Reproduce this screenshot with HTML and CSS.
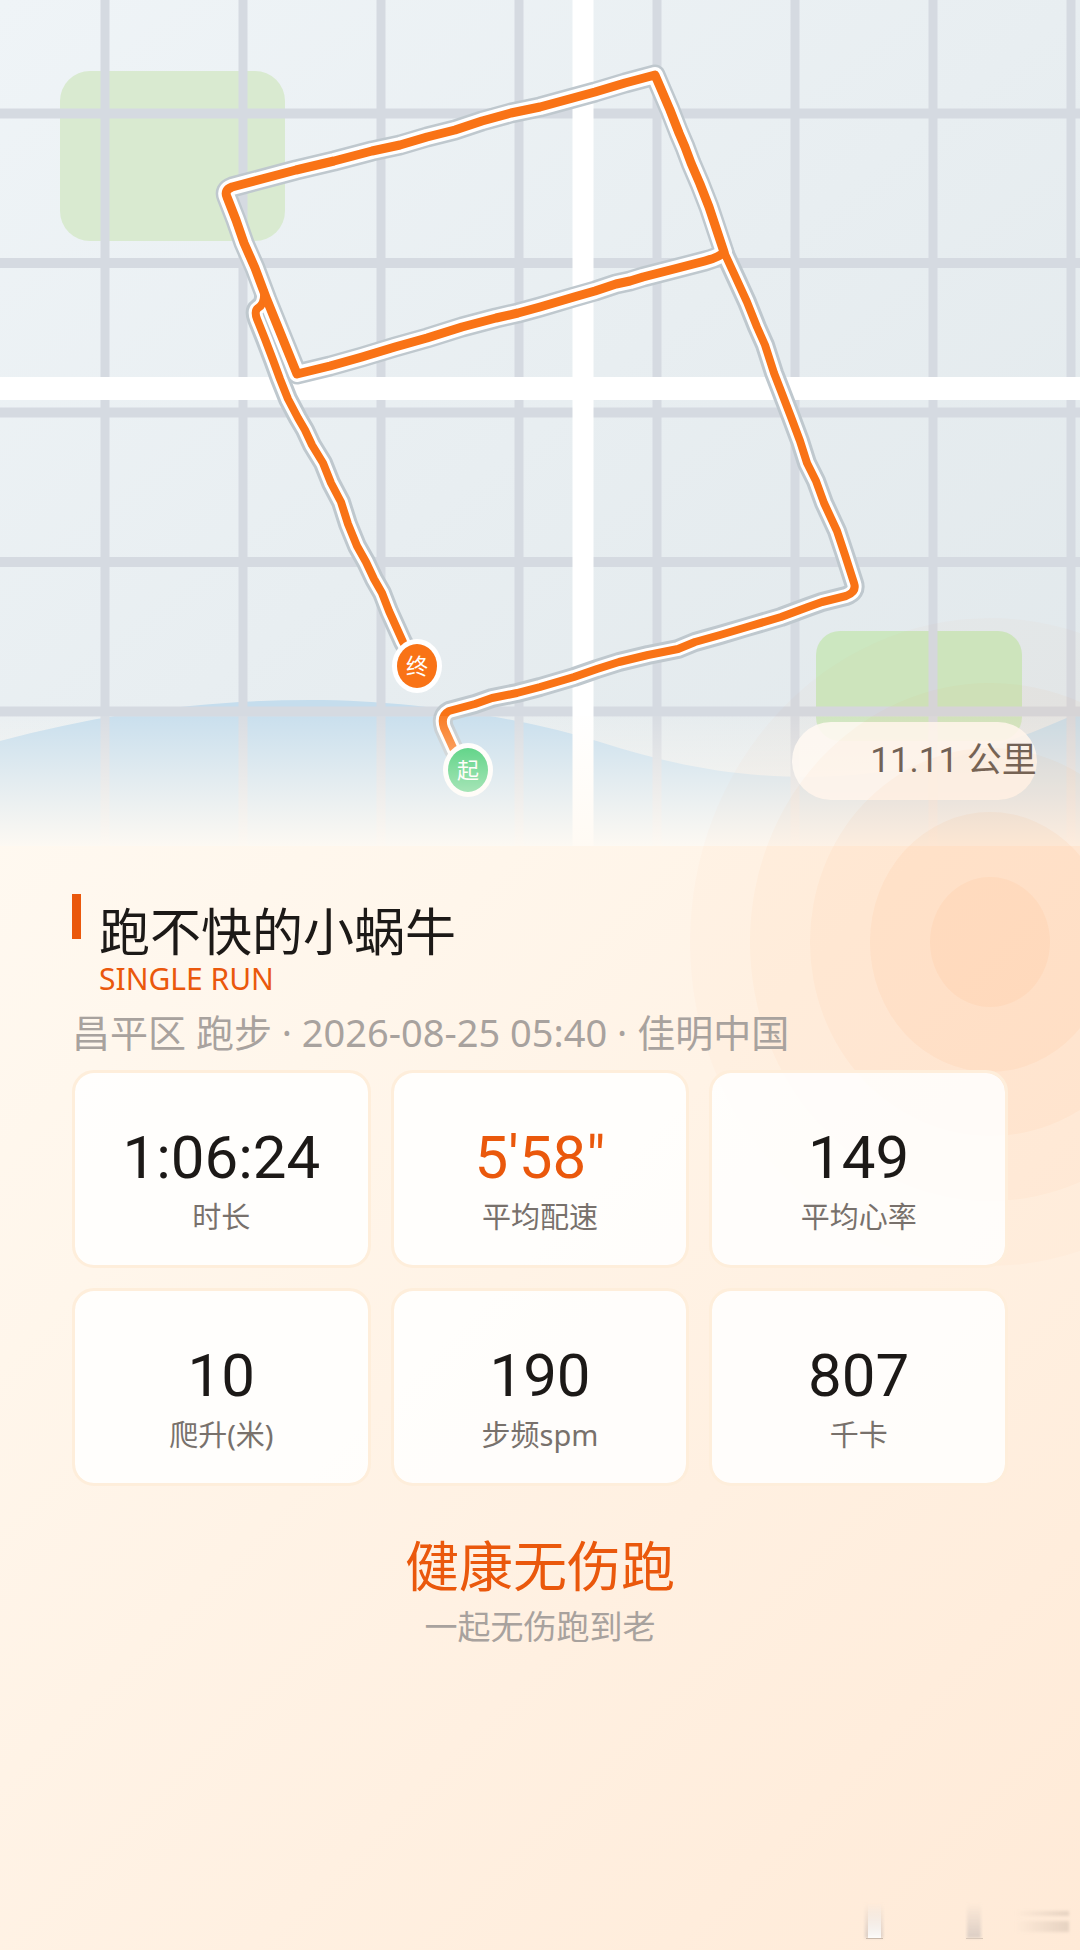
FILE: index.html
```html
<!DOCTYPE html>
<html lang="zh-CN">

<head>
    <meta charset="UTF-8">
    <meta name="viewport" content="width=device-width, initial-scale=1">
    <title>跑不快的小蜗牛</title>
    <link rel="stylesheet" href="styles.css">
</head>

<body>
    <div class="page">
        <header class="map">
            <svg class="map-img" viewBox="0 0 1080 846" aria-hidden="true">
                <defs>
                    <linearGradient id="land" x1="0" y1="0" x2="1" y2="1">
                        <stop offset="0" stop-color="#eff4f7" />
                        <stop offset="1" stop-color="#e1e8eb" />
                    </linearGradient>
                    <path id="route" d="M468 770 L454 750 L444 728 Q440 716 449 711 L475 704 L492 698 L517 693 L540 687 L574 677 L597 669 L619 662 L648 655 L678 649 L695 642 L720 635 L747 627 L781 617 L808 607 L822 602 L846 596 Q857 592 854 583 L845 555 L837 531 L824 503 L816 481 L807 463 L800 441 L791 417 L781 391 L774 373 L765 345 L757 327 L747 302 L736 278 L724 252" />
                    <!-- 跑了两圈的部分 -->
                    <path id="loop" d="M724 252 L716 228 L709 207 L700 184 L691 163 L685 147 L679 133 L670 110 L655 75 L625 83 L595 92 L540 107 L511 113 L482 121 L455 130 L427 137 L400 145 L372 151 L334 161 L296 170 L232 187 Q224 190 227 197 L236 220 L244 243 L255 268 L267 300 L282 337 L297 374 L330 366 L362 357 L395 347 L427 338 L462 327 L496 318 L518 313 L540 307 L574 297 L595 291 L616 284 L630 281 L643 277 L678 268 L705 261 Q720 257 724 252" />
                    <path id="back" d="M264 292 Q265 304 258 308 Q254 311 257 319 L265 339 L273 360 L280 379 L288 399 L298 418 L305 430 L312 445 L323 463 L331 483 L341 502 L348 524 L357 546 L366 562 L374 579 L382 593 L389 611 L403 642 L417 666" />
                </defs>
                <rect width="1080" height="846" fill="url(#land)" />
                <rect x="60" y="71" width="225" height="170" rx="30" fill="#d9ead0" />
                <rect x="816" y="631" width="206" height="110" rx="24" fill="#cce7c0" />
                <path d="M0 741 C100 714 200 700 310 700 S530 720 600 742 S730 777 810 777 S980 758 1080 712 V846 H0 Z" fill="#c5dded" />
                <!-- 街道 -->
                <g stroke="#d5dae1">
                    <path d="M105 0 V846 M243 0 V846 M381 0 V846 M519 0 V846 M657 0 V846 M795 0 V846 M933 0 V846 M1071 0 V846" stroke-width="9" />
                    <path d="M0 113.5 H1080 M0 263 H1080 M0 412.5 H1080 M0 562 H1080 M0 711.5 H1080" stroke-width="10" />
                </g>
                <path d="M583 0 V846" stroke="#fff" stroke-width="21" />
                <path d="M0 388.5 H1080" stroke="#fff" stroke-width="23" />
                <!-- 轨迹 -->
                <g fill="none" stroke-linejoin="round" stroke-linecap="round">
                    <g stroke="#bfc8ce">
                        <use href="#route" stroke-width="20" />
                        <use href="#back" stroke-width="20" />
                        <use href="#loop" stroke-width="21" />
                    </g>
                    <g stroke="#fff">
                        <use href="#route" stroke-width="14" />
                        <use href="#back" stroke-width="14" />
                        <use href="#loop" stroke-width="16" />
                    </g>
                    <g stroke="#f97316">
                        <use href="#route" stroke-width="8" />
                        <use href="#back" stroke-width="8" />
                        <use href="#loop" stroke-width="9" />
                    </g>
                </g>
                <g class="pin">
                    <ellipse cx="417" cy="666" rx="25" ry="27" fill="#fff" />
                    <ellipse cx="417" cy="666" rx="20" ry="22" fill="#f97316" />
                    <text x="417" y="674">终</text>
                    <ellipse cx="468" cy="770" rx="25" ry="27" fill="#fff" />
                    <ellipse cx="468" cy="770" rx="20" ry="22" fill="#22c55e" />
                    <text x="468" y="778">起</text>
                </g>
            </svg>
            <div class="fade"></div>
            <div class="distance">11.11 公里</div>
        </header>

        <svg class="rings" viewBox="0 0 1080 1950" aria-hidden="true">
            <g fill="#f97316">
                <ellipse cx="990" cy="942" rx="300" ry="324" fill-opacity="0.02" />
                <ellipse cx="990" cy="942" rx="240" ry="259" fill-opacity="0.03" />
                <ellipse cx="990" cy="942" rx="180" ry="194" fill-opacity="0.04" />
                <ellipse cx="990" cy="942" rx="120" ry="130" fill-opacity="0.05" />
                <ellipse cx="990" cy="942" rx="60" ry="65" fill-opacity="0.05" />
            </g>
        </svg>

        <main class="content">
            <div class="head">
                <div class="bar"></div>
                <div class="names">
                    <h1>跑不快的小蜗牛</h1>
                    <p class="type">SINGLE RUN</p>
                </div>
            </div>
            <p class="meta">昌平区 跑步 · 2026-08-25 05:40 · 佳明中国</p>
            <ul class="stats">
                <li><b>1:06:24</b><span>时长</span></li>
                <li class="hot"><b>5'58"</b><span>平均配速</span></li>
                <li><b>149</b><span>平均心率</span></li>
                <li><b>10</b><span>爬升(米)</span></li>
                <li><b>190</b><span>步频spm</span></li>
                <li><b>807</b><span>千卡</span></li>
            </ul>
            <footer class="slogan">
                <h2>健康无伤跑</h2>
                <p>一起无伤跑到老</p>
            </footer>
        </main>

        <svg class="smudge" viewBox="0 0 220 50" aria-hidden="true">
            <defs>
                <linearGradient id="pale" x1="0" y1="0" x2="0" y2="1">
                    <stop offset="0" stop-color="#fff" stop-opacity="0" />
                    <stop offset="1" stop-color="#fff" stop-opacity="0.9" />
                </linearGradient>
                <linearGradient id="dim" x1="0" y1="0" x2="0" y2="1">
                    <stop offset="0" stop-color="#b8b0b0" stop-opacity="0" />
                    <stop offset="1" stop-color="#b8b0b0" stop-opacity="0.5" />
                </linearGradient>
                <linearGradient id="trail">
                    <stop offset="0" stop-color="#b8a698" stop-opacity="0" />
                    <stop offset="1" stop-color="#b8a698" stop-opacity="0.35" />
                </linearGradient>
                <filter id="soft"><feGaussianBlur stdDeviation="1.5" /></filter>
            </defs>
            <rect x="5" y="3" width="18" height="35" fill="url(#dim)" filter="url(#soft)" />
            <rect x="8" y="3" width="13" height="35" fill="url(#pale)" />
            <rect x="6" y="38" width="17" height="1" fill="#c9b8aa" />
            <rect x="107" y="3" width="14" height="35" fill="url(#dim)" filter="url(#soft)" />
            <rect x="106" y="38" width="17" height="1" fill="#d8c7b8" />
            <g fill="url(#trail)" filter="url(#soft)">
                <rect x="155" y="11" width="54" height="5" />
                <rect x="155" y="21" width="54" height="11" />
            </g>
        </svg>
    </div>
</body>

</html>
```
FILE: styles.css
```css
* {
    margin: 0;
    padding: 0;
    box-sizing: border-box;
    list-style: none;
}

body {
    font-family: "Noto Sans", "Noto Sans CJK SC", sans-serif;
    color: #1c1917;
}

.page {
    position: relative;
    overflow: hidden;
    min-height: 100vh;
    background: linear-gradient(135deg, #fffdf8 0%, #fff6eb 45%, #ffead7 100%);
}

/* 地图 */
.map {
    position: relative;
}

.map-img {
    display: block;
    width: 100%;
}

.pin text {
    font-size: 22px;
    fill: #fff;
    text-anchor: middle;
}

.distance {
    position: absolute;
    right: 4%;
    bottom: 46px;
    width: 245px;
    border-radius: 39px;
    background: rgba(255, 252, 247, 0.88);
    color: #6b625b;
    font-family: Roboto, "Noto Sans CJK SC", sans-serif;
    font-size: 35px;
    line-height: 78px;
    text-align: right;
}

.fade {
    position: absolute;
    left: 0;
    right: 0;
    bottom: 0;
    height: 130px;
    background: linear-gradient(rgba(255, 250, 243, 0.08), rgba(255, 250, 243, 0.96));
}

.rings {
    position: absolute;
    top: 0;
    left: 0;
    width: 100%;
    pointer-events: none;
}

/* 内容 */
.content {
    position: relative;
    padding: 48px 72px 60px;
}

.head {
    display: flex;
    gap: 18px;
}

.bar {
    width: 9px;
    height: 45px;
    background: #ea580c;
}

.names {
    padding-top: 6px;
}

h1 {
    font-size: 51px;
    font-weight: 400;
    line-height: 62px;
}

.type {
    font-size: 30px;
    line-height: 34px;
    color: #ea580c;
}

.meta {
    margin-top: 10px;
    font-size: 38px;
    line-height: 52px;
    color: #a8a29e;
    white-space: nowrap;
}

.stats {
    display: grid;
    grid-template-columns: repeat(3, 1fr);
    gap: 20px;
    margin-top: 12px;
}

.stats li {
    display: flex;
    flex-direction: column;
    align-items: center;
    padding: 48px 0 26px;
    border: 3px solid #feeedb;
    border-radius: 22px;
    background: rgba(255, 255, 255, 0.85);
    background-clip: padding-box;
}

.stats b {
    font-family: Roboto, sans-serif;
    font-size: 60px;
    font-weight: 400;
    line-height: 74px;
}

.stats span {
    font-size: 29px;
    line-height: 44px;
    color: #78716c;
}

.hot b {
    color: #ea580c;
}

.slogan {
    margin-top: 44px;
    text-align: center;
}

.slogan h2 {
    font-size: 54px;
    font-weight: 400;
    line-height: 72px;
    color: #ea580c;
}

.slogan p {
    font-size: 33px;
    line-height: 50px;
    color: #a8a29e;
}

.smudge {
    position: absolute;
    right: 0;
    bottom: 0;
    width: 220px;
}
```
